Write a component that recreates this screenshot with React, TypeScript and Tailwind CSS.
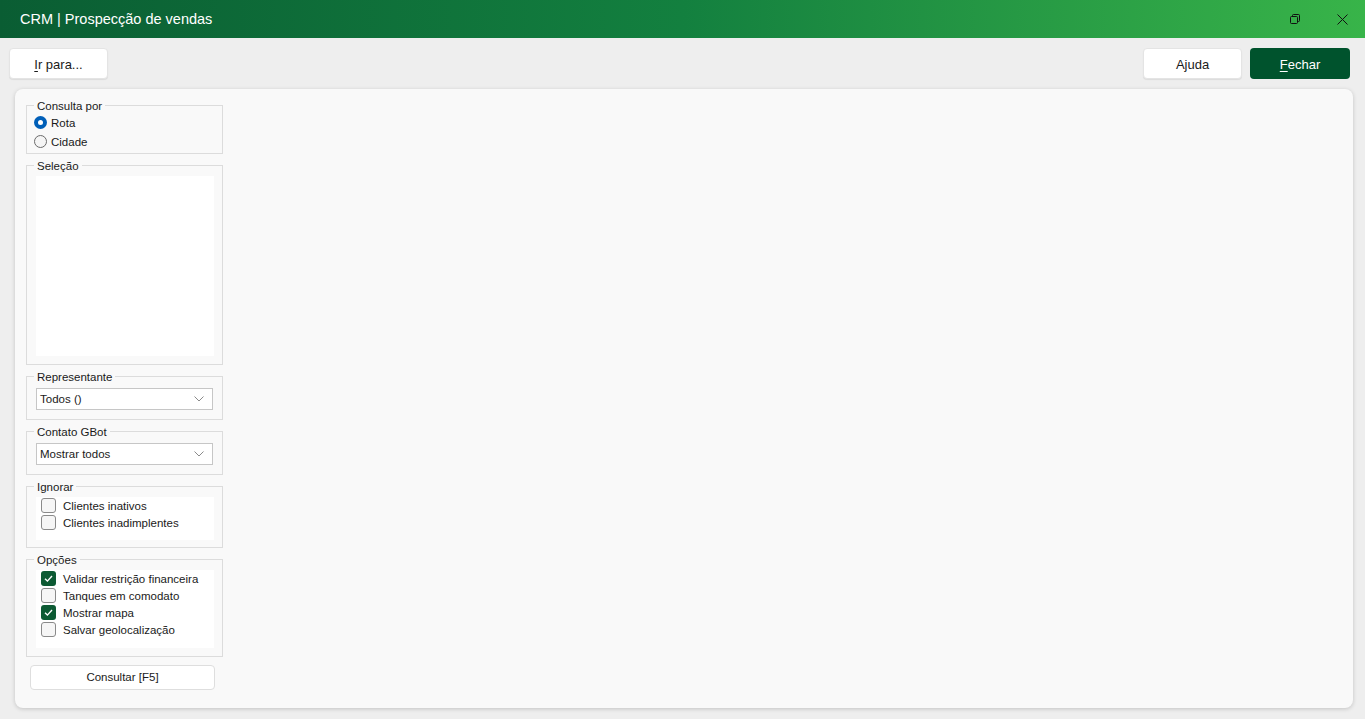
import React from "react";

const font = { fontFamily: '"Liberation Sans", Arial, sans-serif' };

const Check = ({ checked, label }: { checked?: boolean; label: string }) => (
  <div className="flex items-center h-[17px]">
    <span
      className={
        "ml-[5px] w-[15px] h-[15px] rounded-[3px] flex items-center justify-center " +
        (checked ? "bg-[#0c5a33]" : "border border-[#8a8a8a] bg-[#f6f6f6]")
      }
    >
      {checked && (
        <svg width="11" height="11" viewBox="0 0 11 11">
          <path d="M2 5.8 L4.4 8.1 L9 3" fill="none" stroke="#fff" strokeWidth="1.4" />
        </svg>
      )}
    </span>
    <span className="ml-[7px] mt-[2px] text-[#1a1a1a]">{label}</span>
  </div>
);

const Radio = ({ checked, label }: { checked?: boolean; label: string }) => (
  <div className="flex items-center h-[19px]">
    <span
      className={
        "ml-[7px] w-[13px] h-[13px] rounded-full flex items-center justify-center " +
        (checked ? "bg-[#005fb8]" : "border border-[#6b6b6b] bg-[#f5f5f5]")
      }
    >
      {checked && <span className="w-[5px] h-[5px] rounded-full bg-white" />}
    </span>
    <span className="ml-[4px] mt-[2px] text-[#1a1a1a]">{label}</span>
  </div>
);

const Group = ({
  title,
  h,
  children,
}: {
  title: string;
  h: string;
  children?: React.ReactNode;
}) => (
  <fieldset className={"border border-[#dcdcdc] w-[197px] " + h}>
    <legend className="ml-[7px] px-[3px] h-[16px] leading-[18px] text-[#1a1a1a]">{title}</legend>
    {children}
  </fieldset>
);

const Select = ({ value }: { value: string }) => (
  <div className="mt-[4px] ml-[9px] w-[177px] h-[22px] bg-white border border-[#c6c6c6] flex items-center justify-between pl-[3px] pr-[8px]">
    <span className="mt-[2px] text-[#1a1a1a]">{value}</span>
    <svg width="10" height="6" viewBox="0 0 10 6">
      <path d="M0.5 0.5 L5 5 L9.5 0.5" fill="none" stroke="#8a8a8a" strokeWidth="1" />
    </svg>
  </div>
);

export default function App() {
  return (
    <div className="w-[1365px] h-[719px] bg-[#eeeeee] flex flex-col overflow-hidden" style={font}>
      {/* title bar */}
      <div className="h-[38px] flex items-center bg-gradient-to-r from-[#0a5d33] via-[#13803f] to-[#38b449] text-white">
        <span className="ml-[20px] mt-[2px] text-[14.5px]">CRM | Prospecção de vendas</span>
        <div className="ml-auto flex items-center">
          <svg width="11" height="11" viewBox="0 0 11 11" className="mr-[36px]">
            <rect x="0.5" y="2.5" width="7" height="7" rx="1" fill="none" stroke="#111" strokeWidth="1" />
            <path d="M2.5 2.5 V1.5 Q2.5 0.5 3.5 0.5 H8.5 Q9.5 0.5 9.5 1.5 V6.5 Q9.5 7.5 8.5 7.5 H7.5" fill="none" stroke="#111" strokeWidth="1" />
          </svg>
          <svg width="11" height="11" viewBox="0 0 11 11" className="mr-[17px]">
            <path d="M0.5 0.5 L10.5 10.5 M10.5 0.5 L0.5 10.5" stroke="#111" strokeWidth="1" />
          </svg>
        </div>
      </div>

      {/* toolbar */}
      <div className="h-[31px] mt-[10px] flex items-stretch text-[13px]">
        <button className="ml-[9px] w-[99px] bg-white rounded-[4px] border border-[#e4e4e4] shadow-[0_1px_1px_rgba(0,0,0,0.08)] text-[#1a1a1a] pt-[2px]">
          <span className="underline underline-offset-2">I</span>r para...
        </button>
        <button className="ml-auto w-[99px] bg-white rounded-[4px] border border-[#e4e4e4] shadow-[0_1px_1px_rgba(0,0,0,0.08)] text-[#1a1a1a] pt-[2px]">
          Ajuda
        </button>
        <button className="ml-[8px] mr-[15px] w-[100px] bg-[#00532d] rounded-[4px] text-white pt-[2px]">
          <span className="underline underline-offset-2">F</span>echar
        </button>
      </div>

      {/* main panel */}
      <div className="mt-[10px] ml-[15px] mr-[12px] h-[619px] bg-[#f9f9f9] rounded-[8px] shadow-[0_1px_4px_rgba(0,0,0,0.18)] pl-[11px] pt-[8px] text-[11.5px]">
        <div className="flex flex-col gap-[3px]">
          <Group title="Consulta por" h="h-[57px]">
            <Radio checked label="Rota" />
            <Radio label="Cidade" />
          </Group>
          <Group title="Seleção" h="h-[208px]">
            <div className="mt-[3px] ml-[9px] w-[178px] h-[180px] bg-white" />
          </Group>
          <Group title="Representante" h="h-[52px]">
            <Select value="Todos ()" />
          </Group>
          <Group title="Contato GBot" h="h-[52px]">
            <Select value="Mostrar todos" />
          </Group>
          <Group title="Ignorar" h="h-[70px]">
            <div className="mt-[3px] ml-[9px] w-[178px] h-[43px] bg-white">
              <Check label="Clientes inativos" />
              <Check label="Clientes inadimplentes" />
            </div>
          </Group>
          <Group title="Opções" h="h-[106px]">
            <div className="mt-[3px] ml-[9px] w-[178px] h-[78px] bg-white">
              <Check checked label="Validar restrição financeira" />
              <Check label="Tanques em comodato" />
              <Check checked label="Mostrar mapa" />
              <Check label="Salvar geolocalização" />
            </div>
          </Group>
        </div>
        <button className="mt-[8px] ml-[4px] w-[185px] h-[25px] bg-white border border-[#dedede] rounded-[4px] text-[#1a1a1a] pt-[1px]">
          Consultar [F5]
        </button>
      </div>
    </div>
  );
}
